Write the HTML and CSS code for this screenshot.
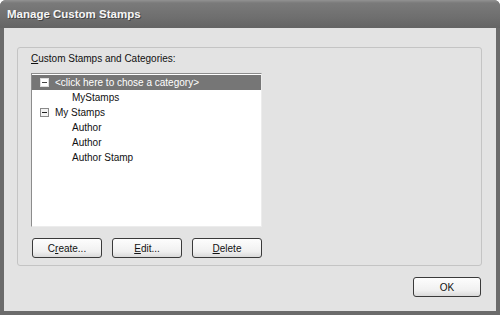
FILE: index.html
```html
<!DOCTYPE html>
<html lang="en">
<head>
    <meta charset="UTF-8">
    <title>Manage Custom Stamps</title>
    <link rel="stylesheet" href="styles.css">
</head>
<body>

    <div class="window">
        <div class="titlebar">Manage Custom Stamps</div>

        <div class="client">
            <!-- Group box -->
            <div class="group">
                <div class="label"><u>C</u>ustom Stamps and Categories:</div>

                <div class="tree">
                    <div class="row selected">
                        <span class="toggle">
                            <svg width="9" height="9" viewBox="0 0 9 9"><rect x="0.5" y="0.5" width="8" height="8" fill="#fff" stroke="#ddd"/><rect x="2" y="4" width="5" height="1" fill="#444"/></svg>
                        </span>
                        <span class="text">&lt;click here to chose a category&gt;</span>
                    </div>
                    <div class="row child"><span class="text">MyStamps</span></div>
                    <div class="row">
                        <span class="toggle">
                            <svg width="9" height="9" viewBox="0 0 9 9"><rect x="0.5" y="0.5" width="8" height="8" fill="#f4f4f4" stroke="#8a8a8a"/><rect x="2" y="4" width="5" height="1" fill="#222"/></svg>
                        </span>
                        <span class="text">My Stamps</span>
                    </div>
                    <div class="row child"><span class="text">Author</span></div>
                    <div class="row child"><span class="text">Author</span></div>
                    <div class="row child"><span class="text">Author Stamp</span></div>
                </div>

                <div class="buttons">
                    <button>C<u>r</u>eate...</button>
                    <button><u>E</u>dit...</button>
                    <button><u>D</u>elete</button>
                </div>
            </div>

            <div class="footer">
                <button class="ok">OK</button>
            </div>
        </div>
    </div>

</body>
</html>
```

FILE: styles.css
```css
body {
    margin: 0;
    padding: 0;
    font-family: "Liberation Sans", Arial, sans-serif;
    font-size: 10px;
    color: #111;
    background: #fff;
}
.window {
    width: 500px;
    height: 315px;
    box-sizing: border-box;
    background: #6b6b6b;
    border-radius: 6px 6px 0 0;
    padding: 0 4px 4px 4px;
    display: flex;
    flex-direction: column;
}
.titlebar {
    height: 28px;
    line-height: 29px;
    margin: 0 -4px;
    padding-left: 7px;
    border-radius: 6px 6px 0 0;
    background: linear-gradient(#929292 0, #7a7a7a 3px, #6f6f6f 60%, #646464 100%);
    color: #f6f6f6;
    font-family: "Liberation Sans", Arial, sans-serif;
    font-weight: bold;
    font-size: 11.5px;
    text-shadow: 1px 1px 0 #444;
}
.client {
    flex: 1;
    background: #e3e3e3;
    padding: 19px 14px 0 13px;
    display: flex;
    flex-direction: column;
}
.group {
    height: 219px;
    box-sizing: border-box;
    border: 1px solid #c4c4c4;
    border-radius: 3px;
    padding: 4px 13px 0 13px;
}
.label {
    height: 14px;
    line-height: 14px;
}
.tree {
    margin-top: 7px;
    width: 231px;
    height: 154px;
    box-sizing: border-box;
    background: #fff;
    border: 1px solid #8c8c8c;
    border-right-color: #ececec;
    border-bottom-color: #ececec;
    padding-top: 1px;
}
.row {
    height: 15px;
    line-height: 15px;
    display: flex;
    align-items: center;
    padding-left: 8px;
}
.row.child {
    padding-left: 40px;
}
.row.selected {
    background: #767676;
    color: #fff;
}
.toggle {
    width: 9px;
    height: 9px;
    margin-right: 6px;
    display: flex;
}
.buttons {
    margin-top: 11px;
    display: flex;
    gap: 10px;
    padding-left: 1px;
}
button {
    width: 70px;
    height: 20px;
    box-sizing: border-box;
    font-family: "Liberation Sans", Arial, sans-serif;
    font-size: 10px;
    color: #111;
    border: 1px solid #3a3a3a;
    border-radius: 3px;
    background: linear-gradient(#fdfdfd, #f0f0f0 70%, #dadada);
    padding: 0;
}
.footer {
    display: flex;
    justify-content: flex-end;
    margin-top: 11px;
    padding-right: 1px;
}
.ok {
    width: 68px;
}
```
